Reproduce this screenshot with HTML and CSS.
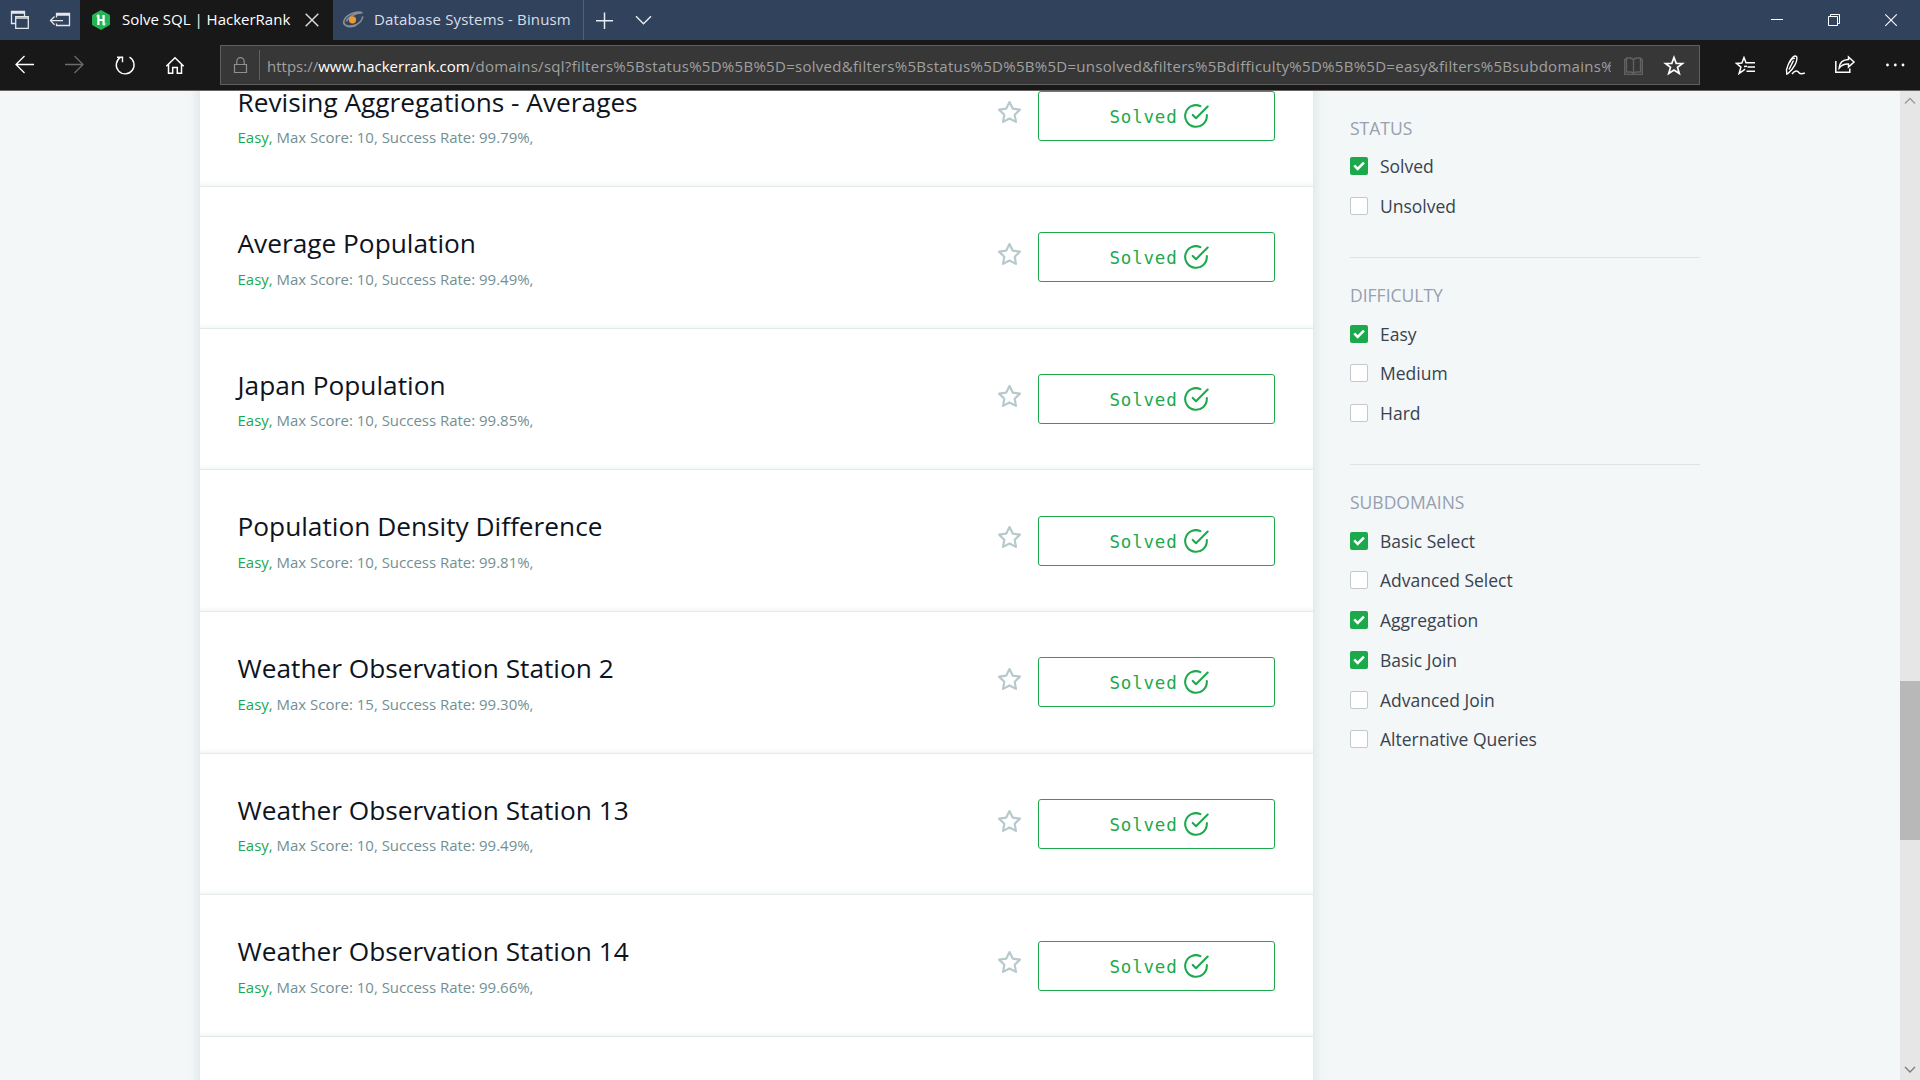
FILE: index.html
```
<!DOCTYPE html>
<html lang="en">
<head>
<meta charset="utf-8">
<title>Solve SQL | HackerRank</title>
<link rel="stylesheet" href="styles.css">
</head>
<body>
<svg class="defs" aria-hidden="true">
  <symbol id="star" viewBox="0 0 24 24"><path d="M12 2l3.09 6.26L22 9.27l-5 4.87 1.18 6.88L12 17.77l-6.18 3.25L7 14.14 2 9.27l6.91-1.01z" fill="none" stroke="#b7c9cc" stroke-width="2.1" stroke-linejoin="round"/></symbol>
  <symbol id="done" viewBox="0 0 24 24"><path d="M22 11.08V12a10 10 0 1 1-5.93-9.14M22.8 3.2L12 14.01l-3-3" fill="none" stroke="#1ba94c" stroke-width="1.9" stroke-linecap="round" stroke-linejoin="round"/></symbol>
  <symbol id="tick" viewBox="0 0 18 18"><path d="M4.2 8.4l3.5 3.5 6.2-6.2" fill="none" stroke="#fff" stroke-width="2.5"/></symbol>
</svg>

<header class="tabbar">
  <div class="tab-tools">
    <svg width="40" height="40" viewBox="0 0 40 40" fill="none" stroke="#e4e7ec" stroke-width="1.3"><path d="M15.5 23.5h-4v-12h13v4.500M11.500 13h13"/><path d="M15.700 16.700h12.600v11.600H15.700zM15.700 18.200h12.600"/></svg>
    <svg width="40" height="40" viewBox="40 0 40 40" fill="none" stroke="#e4e7ec" stroke-width="1.3"><path d="M56.500 17.500v-4h13v12h-13v-2M56.500 15h13M51 20.600h12M54.500 16.500l-4 4.100 4 4.100"/></svg>
  </div>
  <div class="tab active">
    <svg width="20" height="22" viewBox="0 0 20 22"><path d="M10 1l8.500 4.800q.5.400.5 1v8.400q0 .600-.5 1L10 21l-8.500-4.800q-.5-.400-.5-1V6.800q0-.600.5-1z" fill="#22b455"/><path d="M7.400 6v10M12.600 6v10M7.400 11h5.200" stroke="#fff" stroke-width="2.200"/><path d="M5.300 7.500l2-2.300M14.700 14.500l-2 2.300" stroke="#fff" stroke-width="1"/></svg>
    <span class="tab-title">Solve SQL | HackerRank</span>
    <svg class="tab-close" width="14" height="14" viewBox="0 0 14 14" fill="none" stroke="#e0e0e0" stroke-width="1.400"><path d="M.7.7l12.600 12.600M13.300.7L.7 13.300"/></svg>
  </div>
  <div class="tab">
    <svg width="22" height="18" viewBox="0 0 22 18" fill="none"><path d="M20.500 1.800C14-.5 3.500 4 1.800 10.500c-.9 4.500 6 5.500 11.500 3.500 4-1.500 7.500-5 7.300-8.700M20.500 1.800C13 2 6 6 4.500 10.500M2 12c2 5 9 4.500 13 1.500" stroke="#8a8d92" stroke-width="1.600"/><circle cx="10.500" cy="8.800" r="3.600" fill="#ee9a30"/></svg>
    <span class="tab-title wide">Database Systems - Binusm</span>
  </div>
  <svg width="42" height="40" viewBox="584 0 42 40" stroke="#e8ebef" stroke-width="1.500"><path d="M596 20.800h17M604.500 12.500V29"/></svg>
  <svg width="36" height="40" viewBox="626 0 36 40" fill="none" stroke="#e8ebef" stroke-width="1.500"><path d="M636 16.300l7.500 7.500 7.500-7.500"/></svg>
  <div class="window-controls">
    <svg width="57" height="40" viewBox="1749 0 57 40" stroke="#fff"><path d="M1771 19.500h12"/></svg>
    <svg width="57" height="40" viewBox="1806 0 57 40" fill="none" stroke="#fff"><path d="M1828.500 16.500h9v9h-9zM1830.500 16.500v-2h9v9h-2"/></svg>
    <svg width="57" height="40" viewBox="1863 0 57 40" stroke="#fff" stroke-width="1.100"><path d="M1885.300 14.300l11.500 11.500M1896.800 14.300l-11.500 11.500"/></svg>
  </div>
</header>

<nav class="toolbar">
  <svg width="50" height="50" viewBox="0 40 50 50" fill="none" stroke="#fff" stroke-width="1.300"><path d="M34 64.500H16M24.500 56l-8.500 8.500 8.500 8.500"/></svg>
  <svg width="50" height="50" viewBox="50 40 50 50" fill="none" stroke="#6c6c6c" stroke-width="1.300"><path d="M65 64.500h18M74.500 56l8.500 8.500-8.500 8.500"/></svg>
  <svg width="50" height="50" viewBox="100 40 50 50" fill="none" stroke="#fff" stroke-width="1.400"><path d="M129.500 57.200a8.900 8.900 0 1 1-9 .2M117 57.300h5.500v5"/></svg>
  <svg width="50" height="50" viewBox="150 40 50 50" fill="none" stroke="#fff" stroke-width="1.500"><path d="M166.300 66.300l8.700-8.500 8.700 8.500M168.500 64.500v8.700h4.200v-5.700h4.600v5.700h4.200v-8.700"/></svg>
  <div class="address">
    <svg width="38" height="38" viewBox="221 46 38 38" fill="none" stroke="#8f8f8f" stroke-width="1.200"><path d="M234.500 64.500h12v8h-12zM236.800 64.500v-3.200a3.700 3.700 0 0 1 7.400 0v3.200"/></svg>
    <span class="divider"></span>
    <span class="url">https://<span class="host">www.hackerrank.com</span><span class="path">/domains/sql?filters%5Bstatus%5D%5B%5D=solved&amp;filters%5Bstatus%5D%5B%5D=unsolved&amp;filters%5Bdifficulty%5D%5B%5D=easy&amp;filters%5Bsubdomains%</span></span>
    <svg width="44" height="38" viewBox="1611 46 44 38" fill="none" stroke="#636363" stroke-width="1.300"><path d="M1633.500 60v13M1633.500 60q-1-2-3.500-2h-3.500v14h4q2 0 3 1.500 1-1.500 3-1.500h4V58h-3.500q-2.500 0-3.500 2M1626.500 59.500h-1.800v14.800h17.600V59.500h-1.800"/></svg>
    <svg width="44" height="38" viewBox="1655 46 44 38" fill="none" stroke="#fff" stroke-width="1.700"><path d="M1674 57.500l2.200 5.800 6.300.2-5 3.900 1.800 6.100-5.300-3.500-5.300 3.500 1.800-6.100-5-3.900 6.300-.2z"/></svg>
  </div>
  <svg width="50" height="50" viewBox="1720 40 50 50" fill="none" stroke="#fff" stroke-width="1.500"><path d="M1747 62.800l-1-.1-2-5.200-2.100 5.600-5.400.3 4.400 3.700-1.800 6.300 4-2.800 2-1.500M1744 66.500l3-.2M1747 62.700h8M1747.500 66.900h7.500M1746.500 71.300h8.500"/></svg>
  <svg width="50" height="50" viewBox="1770 40 50 50" fill="none" stroke="#fff" stroke-width="1.400"><path d="M1788 73.500l-1.200.5-.3-4.300c1.500-5.300 3.800-10.300 6.800-13 1.200-1 3-1 3.500.3.800 4-2.800 11.500-8.800 16.500zM1790 62.500c.5-3 2.500-4.500 5-4M1789 69.500l4.500-9"/><path d="M1792 74c3-4 5.500-3.500 6.800-1.500 1.500 2 3.500 1.500 6 .5"/></svg>
  <svg width="50" height="50" viewBox="1820 40 50 50" fill="none" stroke="#fff" stroke-width="1.500"><path d="M1835.800 61v11.200h14V68.500M1848.500 57l5.500 5-5.500 5v-3c-4-.2-7 1-9.300 4 .3-5 3.500-8.300 9.300-8.500z"/></svg>
  <svg width="50" height="50" viewBox="1870 40 50 50" fill="#fff"><circle cx="1887.500" cy="65" r="1.400"/><circle cx="1895.300" cy="65" r="1.400"/><circle cx="1903" cy="65" r="1.400"/></svg>
</nav>

<div class="viewport">
  <main class="challenges">
    <article class="challenge"><div class="info"><h4>Revising Aggregations - Averages</h4><p><span class="easy">Easy,</span> Max Score: 10, Success Rate: 99.79%,</p></div><svg class="star"><use href="#star"/></svg><a class="solved">Solved<svg><use href="#done"/></svg></a></article>
    <article class="challenge"><div class="info"><h4>Average Population</h4><p><span class="easy">Easy,</span> Max Score: 10, Success Rate: 99.49%,</p></div><svg class="star"><use href="#star"/></svg><a class="solved">Solved<svg><use href="#done"/></svg></a></article>
    <article class="challenge"><div class="info"><h4>Japan Population</h4><p><span class="easy">Easy,</span> Max Score: 10, Success Rate: 99.85%,</p></div><svg class="star"><use href="#star"/></svg><a class="solved">Solved<svg><use href="#done"/></svg></a></article>
    <article class="challenge"><div class="info"><h4>Population Density Difference</h4><p><span class="easy">Easy,</span> Max Score: 10, Success Rate: 99.81%,</p></div><svg class="star"><use href="#star"/></svg><a class="solved">Solved<svg><use href="#done"/></svg></a></article>
    <article class="challenge"><div class="info"><h4>Weather Observation Station 2</h4><p><span class="easy">Easy,</span> Max Score: 15, Success Rate: 99.30%,</p></div><svg class="star"><use href="#star"/></svg><a class="solved">Solved<svg><use href="#done"/></svg></a></article>
    <article class="challenge"><div class="info"><h4>Weather Observation Station 13</h4><p><span class="easy">Easy,</span> Max Score: 10, Success Rate: 99.49%,</p></div><svg class="star"><use href="#star"/></svg><a class="solved">Solved<svg><use href="#done"/></svg></a></article>
    <article class="challenge"><div class="info"><h4>Weather Observation Station 14</h4><p><span class="easy">Easy,</span> Max Score: 10, Success Rate: 99.66%,</p></div><svg class="star"><use href="#star"/></svg><a class="solved">Solved<svg><use href="#done"/></svg></a></article>
  </main>

  <aside class="filters">
    <section class="group">
      <h5>STATUS</h5>
      <div class="option"><span class="box on"><svg><use href="#tick"/></svg></span>Solved</div>
      <div class="option"><span class="box"></span>Unsolved</div>
    </section>
    <section class="group">
      <h5>DIFFICULTY</h5>
      <div class="option"><span class="box on"><svg><use href="#tick"/></svg></span>Easy</div>
      <div class="option"><span class="box"></span>Medium</div>
      <div class="option"><span class="box"></span>Hard</div>
    </section>
    <section class="group">
      <h5>SUBDOMAINS</h5>
      <div class="option"><span class="box on"><svg><use href="#tick"/></svg></span>Basic Select</div>
      <div class="option"><span class="box"></span>Advanced Select</div>
      <div class="option"><span class="box on"><svg><use href="#tick"/></svg></span>Aggregation</div>
      <div class="option"><span class="box on"><svg><use href="#tick"/></svg></span>Basic Join</div>
      <div class="option"><span class="box"></span>Advanced Join</div>
      <div class="option"><span class="box"></span>Alternative Queries</div>
    </section>
  </aside>

  <div class="scrollbar">
    <svg width="20" height="20" viewBox="0 0 20 20" fill="none" stroke="#9a9a9a" stroke-width="1.300"><path d="M5 12.500l5-5 5 5"/></svg>
    <div class="thumb"></div>
    <svg width="20" height="20" viewBox="0 0 20 20" fill="none" stroke="#7a7a7a" stroke-width="1.300"><path d="M5 7l5 5 5-5"/></svg>
  </div>
</div>
</body>
</html>
```
FILE: styles.css
```
* { box-sizing: border-box; }

body {
  margin: 0;
  width: 1920px;
  height: 1080px;
  overflow: hidden;
  display: flex;
  flex-direction: column;
  font-family: "Open Sans", sans-serif;
  background: #f3f7f8;
}

svg { display: block; flex: none; }
.defs { display: none; }
h4, h5, p { margin: 0; font-weight: 400; }

/* Browser tabs */
.tabbar {
  flex: none;
  display: flex;
  height: 40px;
  background: #31425d;
}
.tab-tools { display: flex; width: 80px; }
.tab {
  display: flex;
  align-items: center;
  width: 251px;
  padding-left: 9px;
  border-right: 1px solid #52617a;
  color: #d9dee6;
}
.tab.active {
  width: 253px;
  padding-left: 11px;
  border-right: 0;
  background: #181818;
  color: #fff;
}
.tab-title {
  margin-left: 11px;
  padding-bottom: 2px;
  font-size: 15px;
  line-height: 20px;
  white-space: nowrap;
}
.tab-title.wide { margin-left: 10px; letter-spacing: 0.15px; }
.tab-close { margin-left: auto; margin-right: 14px; }
.window-controls { display: flex; margin-left: auto; }

/* Navigation bar */
.toolbar {
  flex: none;
  display: flex;
  height: 51px;
  border-bottom: 1px solid #686464;
  background: #181818;
}
.address {
  display: flex;
  align-items: center;
  width: 1480px;
  height: 40px;
  margin: 5px 20px 0;
  border: 1px solid #5f5f5f;
  background: #373737;
}
.divider { flex: none; width: 1px; height: 30px; background: #5f5f5f; }
.url {
  flex: 1;
  min-width: 0;
  margin-left: 7px;
  padding-top: 1px;
  overflow: hidden;
  font-size: 15px;
  line-height: 22px;
  white-space: nowrap;
  color: #a0a0a0;
}
.url .host { color: #fff; }
.url .path { letter-spacing: 0.29px; }

/* Page */
.viewport {
  flex: 1;
  min-height: 0;
  display: flex;
  overflow: hidden;
}
.challenges {
  flex: none;
  align-self: flex-start;
  width: 1113px;
  height: 1060px;
  margin: -45.7px 0 0 200px;
  background: #fff;
  box-shadow: 0 0 12px rgba(150, 180, 180, 0.35);
}
.challenge {
  display: flex;
  align-items: flex-start;
  height: 141.67px;
  padding: 0 38.5px 0 37.5px;
  border-bottom: 1px solid #e2ebea;
  box-shadow: inset 0 -5px 5px -4px rgba(200, 215, 213, 0.3);
}
.info { flex: 1; padding-top: 40.2px; }
.info h4 {
  font-size: 26.25px;
  line-height: 32px;
  color: #0e141e;
}
.info p {
  margin-top: 9.5px;
  font-size: 14.97px;
  line-height: 20px;
  color: #738f93;
}
.info .easy { color: #1ba94c; }
.star { width: 25px; height: 25px; margin: 55px 16px 0 0; }
.solved {
  display: flex;
  align-items: center;
  justify-content: center;
  width: 237px;
  height: 50px;
  margin-top: 45.4px;
  padding: 2px 0 0 6px;
  border: 1px solid #1ba94c;
  border-radius: 3px;
  font: 17.5px/24px "DejaVu Sans Mono", monospace;
  letter-spacing: 0.8px;
  color: #1ba94c;
}
.solved svg { width: 26px; height: 26px; margin: -2px 0 0 5px; }

/* Filters */
.filters {
  width: 350px;
  margin-left: 37px;
  padding-top: 25px;
  font-size: 17.5px;
  line-height: 24px;
  color: #39424e;
}
.group + .group {
  margin-top: 31px;
  padding-top: 25.5px;
  border-top: 1px solid #dde3e6;
}
.group h5 {
  margin-bottom: 6.5px;
  font-size: 17.5px;
  color: #979fb0;
}
.option { display: flex; align-items: center; height: 39.7px; }
.box {
  width: 18px;
  height: 18px;
  margin-right: 12px;
  border: 1px solid #c2c7d0;
  border-radius: 2px;
  background: #fff;
}
.box.on { border: 0; background: #1ba94c; }
.box svg { width: 18px; height: 18px; }

/* Scrollbar */
.scrollbar {
  display: flex;
  flex-direction: column;
  width: 20px;
  margin-left: auto;
  background: #e6e6e6;
}
.thumb { height: 159px; margin: 570px 0 auto; background: #b8b8b8; }
```
